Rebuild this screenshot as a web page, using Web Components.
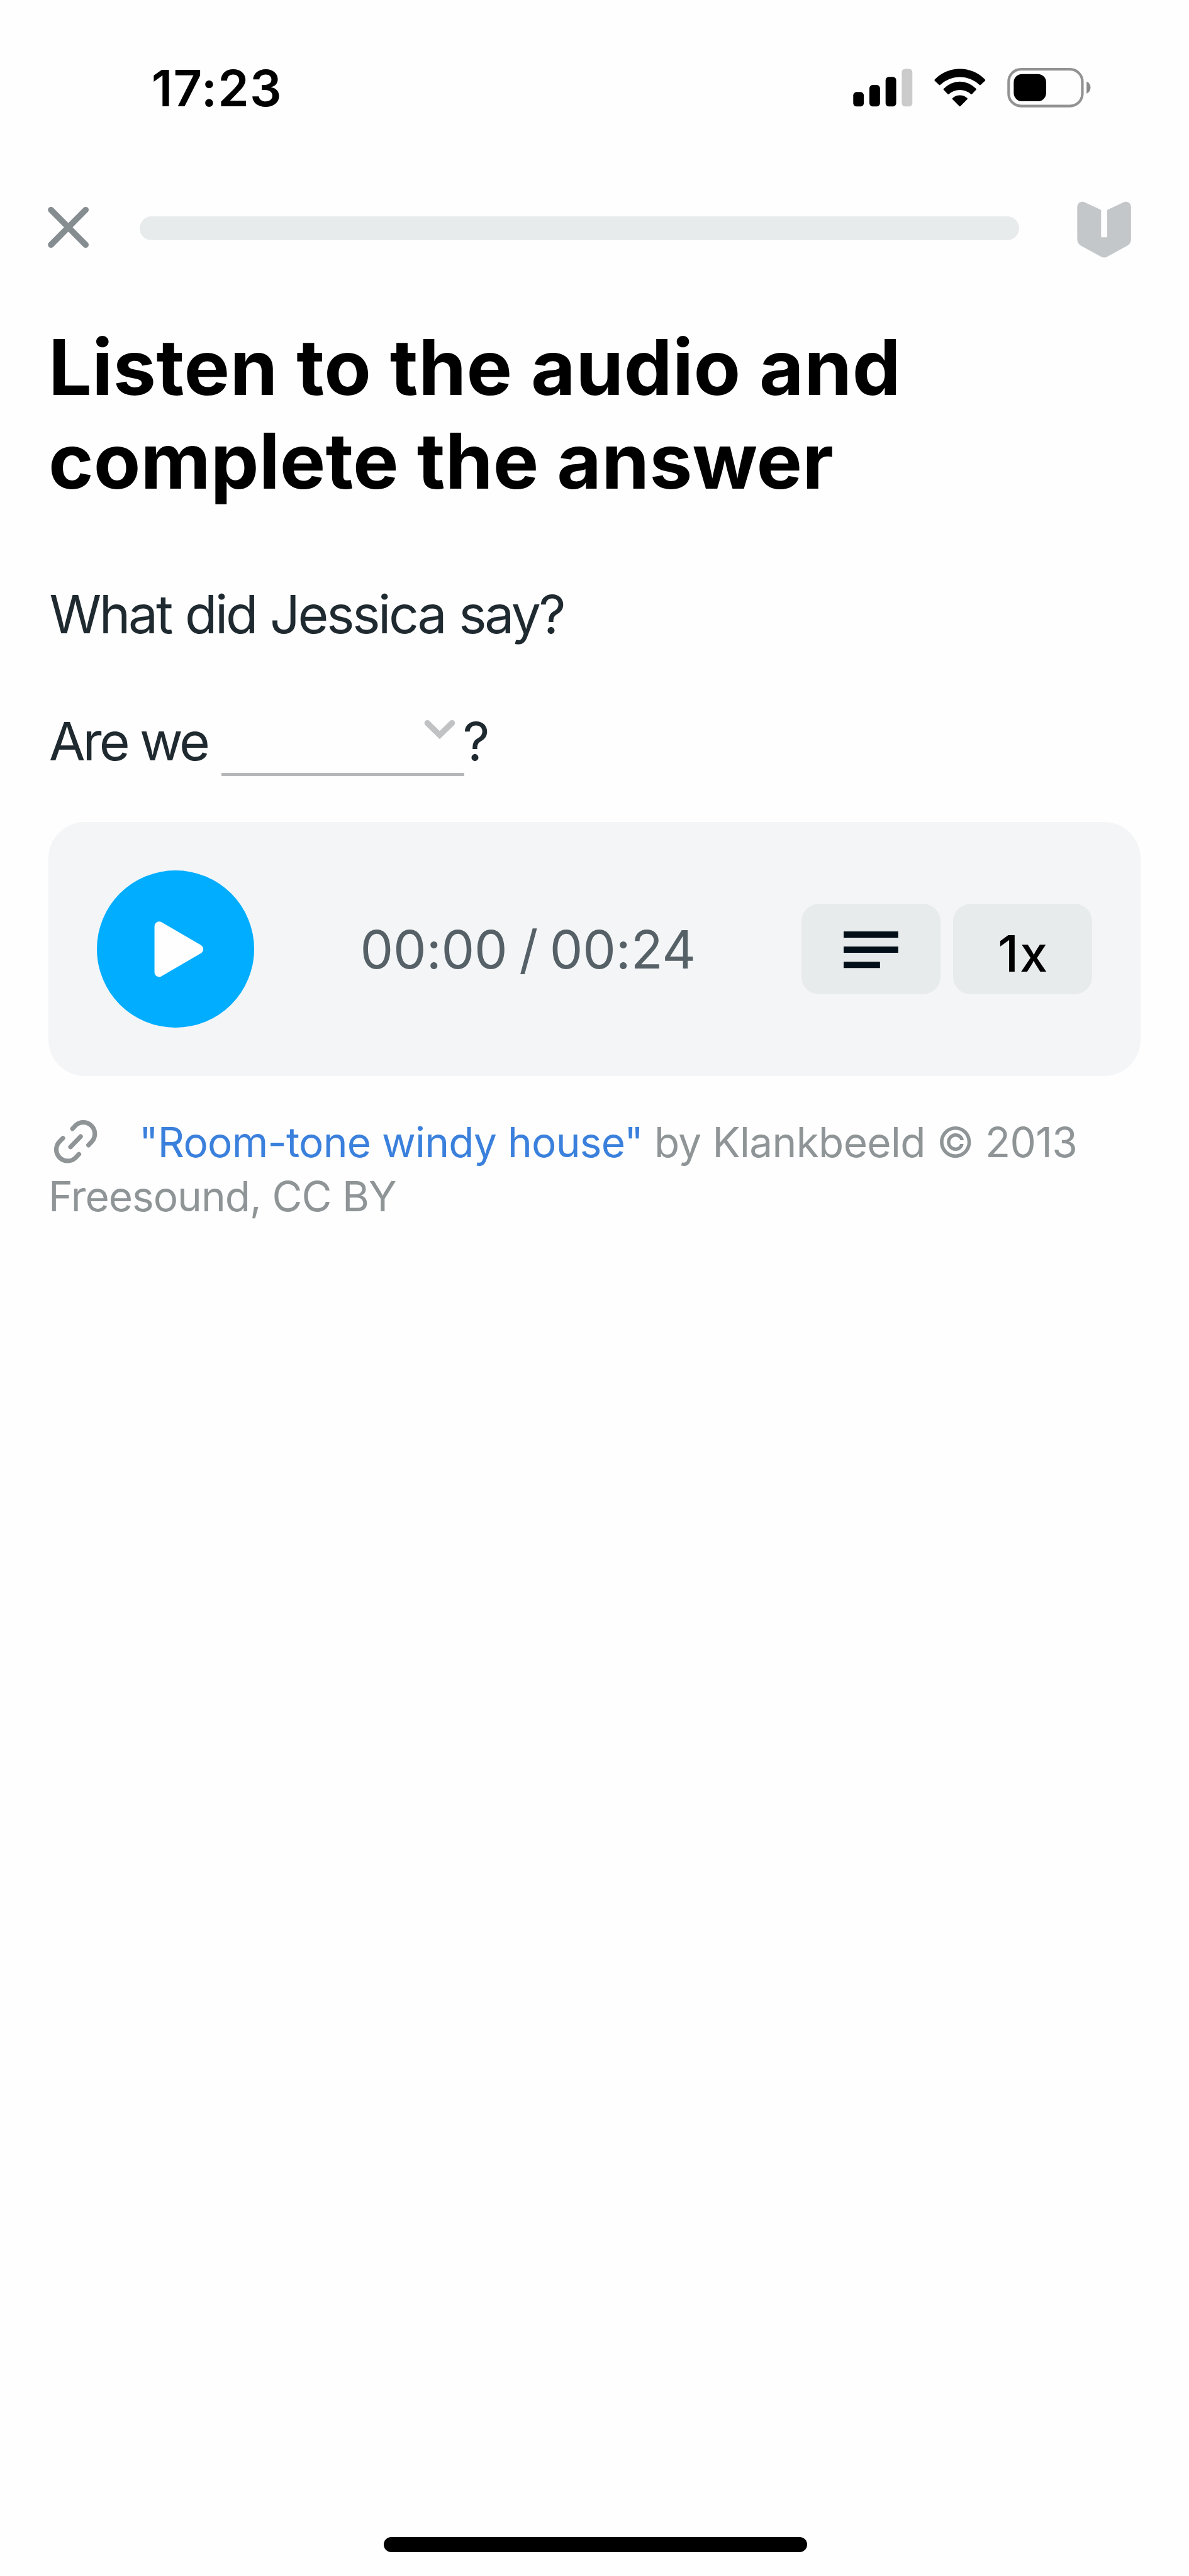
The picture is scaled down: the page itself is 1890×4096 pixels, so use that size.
<!DOCTYPE html>
<html lang="en">
<head>
<meta charset="utf-8">
<title>Listening exercise</title>
<style>
  html { --u: calc(100vw / 2352); }
  body { margin: 0; background: #fefefe; font-family: Inter, "Liberation Sans", sans-serif; }
</style>
</head>
<body>
<exercise-screen>
  <status-bar slot="status">17:23</status-bar>
  <exercise-nav slot="nav"></exercise-nav>
  <exercise-title><span>Listen to the audio and</span><span>complete the answer</span></exercise-title>
  <question-text>What did Jessica say?</question-text>
  <gap-answer><span slot="before">Are we</span><span slot="after">?</span></gap-answer>
  <audio-player time="00:00 / 00:24" speed="1x"></audio-player>
  <source-credit><a slot="link">"Room-tone windy house"</a> by Klankbeeld © 2013<br><span class="last">Freesound, CC BY</span></source-credit>
</exercise-screen>

<script>
const define = (name, markup) => customElements.define(name, class extends HTMLElement {
  constructor() {
    super();
    const t = document.createElement('template');
    t.innerHTML = '<style>svg{display:block;overflow:visible;flex:none}</style>' + markup;
    this.attachShadow({ mode: 'open' }).append(t.content.cloneNode(true));
  }
  connectedCallback() {
    for (const el of this.shadowRoot.querySelectorAll('[data-attr]'))
      el.textContent = this.getAttribute(el.dataset.attr);
  }
});

define('status-bar', `
<style>
  :host { display: flex; justify-content: space-between; height: calc(270 * var(--u));
    padding: calc(125 * var(--u)) calc(193 * var(--u)) 0 calc(299.6 * var(--u));
    font-size: calc(99 * var(--u)); line-height: calc(100 * var(--u)); font-weight: 600;
    letter-spacing: calc(1.4 * var(--u)); color: #000; }
  svg { width: calc(472 * var(--u)); height: calc(100 * var(--u)); }
</style>
<slot></slot>
<svg viewBox="1687 125 472 100">
  <rect x="1687.3" y="182.7" width="21" height="28.6" rx="6.5"/>
  <rect x="1719.3" y="168.7" width="21" height="42.6" rx="6.5"/>
  <rect x="1751.3" y="152.7" width="21" height="58.6" rx="6.5"/>
  <rect x="1783.3" y="136.7" width="21" height="74.6" rx="6.5" fill="#cbcbcb"/>
  <path d="M1848.6 160.6Q1847.4 159 1848.8 157.6A69 69 0 0 1 1947.8 157.6Q1949.2 159 1948 160.6L1939.4 168.6Q1938.3 169.6 1937.2 168.6A56 56 0 0 0 1859.4 168.6Q1858.3 169.6 1857.2 168.6Z"/>
  <path d="M1866.2 178.2Q1865.2 177 1866.6 175.8A43.5 43.5 0 0 1 1930 175.8Q1931.4 177 1930.4 178.2L1922.2 186.8Q1921.2 187.8 1920.2 186.9A33 33 0 0 0 1876.4 186.9Q1875.4 187.8 1874.4 186.8Z"/>
  <path d="M1883.6 197Q1882.6 195.8 1883.8 194.6A22 22 0 0 1 1912.8 194.6Q1914 195.8 1913 197L1899.5 210.6Q1898.3 211.8 1897.1 210.6Z"/>
  <rect x="1994.8" y="137.6" width="145.8" height="72.8" rx="24.5" fill="none" stroke="#929292" stroke-width="5.2"/>
  <rect x="2004.8" y="147" width="64.2" height="54" rx="16.5"/>
  <path d="M2149 161.8Q2156.8 165.5 2156.8 173.9Q2156.8 182.3 2149 186Z" fill="#8b8b8b"/>
</svg>`);

define('exercise-nav', `
<style>
  :host { display: flex; align-items: flex-start; height: calc(120 * var(--u));
    padding: 0 calc(114 * var(--u)) 0 calc(90 * var(--u)); }
  .close { width: calc(91 * var(--u)); height: calc(120 * var(--u)); }
  .badge { width: calc(108 * var(--u)); height: calc(120 * var(--u)); }
  .track { flex: 1; height: calc(47.7 * var(--u)); border-radius: calc(24 * var(--u)); background: #e8ebec;
    margin: calc(33.3 * var(--u)) calc(113.7 * var(--u)) 0 calc(95.8 * var(--u)); }
</style>
<svg class="close" viewBox="90 395 91 120">
  <path d="M101.2 415.8L169.9 484.9M169.9 415.8L101.2 484.9" stroke="#868d91" stroke-width="12" stroke-linecap="round"/>
</svg>
<div class="track"></div>
<svg class="badge" viewBox="2130 395 108 120">
  <path d="M2130.4 411C2130.4 401 2139 396.500 2147.500 401.800L2177.600 416V470H2189.700V416L2219.800 401.800C2228.300 396.500 2236.900 401 2236.900 411V473C2236.900 479.500 2234 484 2228.800 487L2189.600 508.600Q2183.650 511.600 2177.700 508.600L2138.500 487C2133.300 484 2130.400 479.500 2130.400 473Z" fill="#c4c7c9"/>
</svg>`);

define('exercise-title', `
<style>
  :host { display: block; font-size: calc(151.7 * var(--u)); line-height: calc(185.5 * var(--u));
    font-weight: 700; color: #000; white-space: nowrap; letter-spacing: calc(.1 * var(--u)); }
  ::slotted(span) { display: block; }
  ::slotted(span:first-child) { letter-spacing: calc(.6 * var(--u)); }
</style><slot></slot>`);

define('question-text', `
<style>
  :host { display: block; margin-top: calc(141.5 * var(--u)); padding-left: calc(2 * var(--u));
    font-size: calc(104.5 * var(--u)); line-height: calc(140 * var(--u)); color: #1f2a30;
    letter-spacing: calc(-4.2 * var(--u)); word-spacing: calc(2.2 * var(--u)); white-space: nowrap; }
</style><slot></slot>`);

define('gap-answer', `
<style>
  :host { display: flex; margin-top: calc(111.4 * var(--u)); padding-left: calc(1 * var(--u));
    font-size: calc(104.5 * var(--u)); line-height: calc(140 * var(--u)); height: calc(140 * var(--u));
    color: #1f2a30; letter-spacing: calc(-5.1 * var(--u)); }
  .before { width: calc(341.8 * var(--u)); white-space: nowrap; }
  .gap { display: flex; justify-content: flex-end; box-sizing: border-box;
    width: calc(479.7 * var(--u)); height: calc(138 * var(--u));
    padding: calc(26 * var(--u)) calc(17 * var(--u)) 0 0;
    border-bottom: calc(6.4 * var(--u)) solid #b4b8b9; margin-right: calc(-3 * var(--u)); }
  svg { width: calc(62 * var(--u)); height: calc(40 * var(--u)); }
</style>
<div class="before"><slot name="before"></slot></div>
<div class="gap"><svg viewBox="0 0 62 40"><path d="M6.500 7L31 31L55.500 7" fill="none" stroke="#c0c2c3" stroke-width="11.500" stroke-linecap="round"/></svg></div>
<slot name="after"></slot>`);

define('tool-button', `
<style>
  :host { display: flex; align-items: center; justify-content: center; box-sizing: border-box;
    width: calc(274.8 * var(--u)); height: calc(180 * var(--u)); border-radius: calc(35 * var(--u));
    background: #e8ebec; color: #000; }
</style><slot></slot>`);

define('audio-player', `
<style>
  :host { display: flex; align-items: center; box-sizing: border-box; margin-top: calc(89.1 * var(--u));
    height: calc(502.5 * var(--u)); padding: 0 calc(95.7 * var(--u));
    border-radius: calc(72 * var(--u)); background: #f3f5f7; }
  .play { width: calc(311.6 * var(--u)); height: calc(311.6 * var(--u)); border-radius: 50%; background: #00adff; }
  .play svg { width: 100%; height: 100%; }
  .time { flex: 1; text-align: center; font-size: calc(104 * var(--u)); line-height: calc(130 * var(--u));
    color: #566167; white-space: nowrap; letter-spacing: calc(-.2 * var(--u)); word-spacing: calc(-6 * var(--u)); padding-top: calc(2.500 * var(--u)); }
  .tools { display: flex; gap: calc(25.2 * var(--u)); }
  .speed { font-size: calc(99 * var(--u)); line-height: calc(120 * var(--u)); font-weight: 500;
    letter-spacing: calc(2 * var(--u)); padding: calc(17 * var(--u)) 0 0 calc(2 * var(--u)); }
  .lines { width: calc(108 * var(--u)); height: calc(73 * var(--u)); margin-top: calc(2.500 * var(--u)); }
</style>
<div class="play"><svg viewBox="191.3 1722.5 311.6 311.6">
  <path d="M314.500 1833L392.500 1878.400L314.500 1924Z" fill="#fefefe" stroke="#fefefe" stroke-width="18.500" stroke-linejoin="round"/>
</svg></div>
<div class="time" data-attr="time"></div>
<div class="tools">
  <tool-button><svg class="lines" viewBox="0 0 108 73"><path d="M0 0H108V12.400H0ZM0 30H108V42.400H0ZM0 60H72V72.400H0Z" fill="#020f18"/></svg></tool-button>
  <tool-button><span class="speed" data-attr="speed"></span></tool-button>
</div>`);

define('source-credit', `
<style>
  :host { display: block; margin-top: calc(76.9 * var(--u)); font-size: calc(81.8 * var(--u));
    line-height: calc(107.6 * var(--u)); color: #8f9597; white-space: nowrap; letter-spacing: calc(-.8 * var(--u)); }
  svg { display: inline-block; vertical-align: top; width: calc(179.3 * var(--u)); height: calc(107.6 * var(--u)); }
  ::slotted(a) { color: #3a80dc; letter-spacing: calc(-.95 * var(--u)); }
  ::slotted(.last) { letter-spacing: calc(-1.25 * var(--u)); }
</style><svg viewBox="95.7 2206.2 179.3 107.6"><g fill="none" stroke="#8f9597" stroke-width="9" stroke-linecap="round">
  <path d="M143.300 2233.300L150 2226.200A22.700 22.700 0 0 1 182 2258.200L175 2265.700"/>
  <path d="M124.300 2252L117.900 2258.600A22.400 22.400 0 0 0 149.500 2290.500L156 2283.700"/>
  <path d="M159.300 2248.700L139.300 2269.300"/>
</g></svg><slot name="link"></slot><slot></slot>`);

define('home-indicator', `
<style>
  :host { display: block; margin: auto 0 calc(47.5 * var(--u)) calc(758.7 * var(--u));
    width: calc(837.5 * var(--u)); height: calc(29.8 * var(--u));
    border-radius: calc(15 * var(--u)); background: #000; }
</style>`);

define('exercise-screen', `
<style>
  :host { display: flex; flex-direction: column; height: 4096px; overflow: hidden; }
  main { padding: calc(118.8 * var(--u)) calc(95.7 * var(--u)) 0; }
</style>
<slot name="status"></slot>
<slot name="nav"></slot>
<main><slot></slot></main>
<home-indicator></home-indicator>`);
</script>
</body>
</html>
